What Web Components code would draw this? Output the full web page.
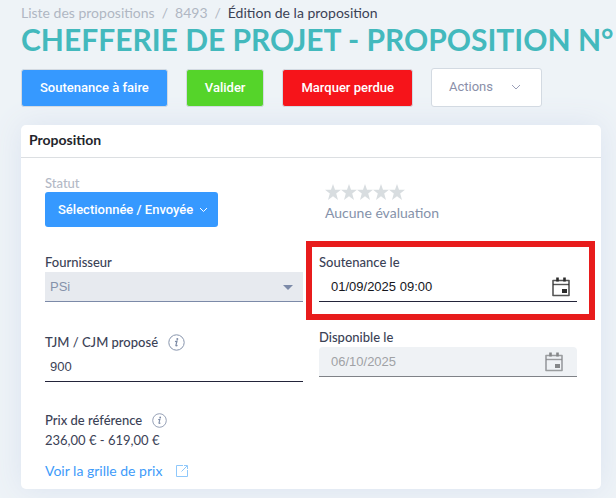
<!DOCTYPE html>
<html lang="fr">
<head>
<meta charset="utf-8">
<meta name="viewport" content="width=device-width, initial-scale=1">
<title>Édition de la proposition</title>
<style>
    body {
        margin: 0;
        background-color: #eef3f7;
        color: #3b4256;
        font-family: Lato, "Liberation Sans", sans-serif;
        font-size: 14px;
        line-height: 20px;
    }
</style>
</head>
<body>
<proposal-page>
    <bread-crumb slot="top">
        <a href="#liste">Liste des propositions</a>
        <a href="#8493">8493</a>
        <span>Édition de la proposition</span>
    </bread-crumb>
    <page-title slot="top">CHEFFERIE DE PROJET - PROPOSITION N°</page-title>
    <action-bar slot="top">
        <app-button variant="primary">Soutenance à faire</app-button>
        <app-button variant="success">Valider</app-button>
        <app-button variant="danger">Marquer perdue</app-button>
        <app-button variant="plain" caret>Actions</app-button>
    </action-bar>
    <info-card>
        <span slot="heading">Proposition</span>
        <status-menu slot="left" label="Statut">Sélectionnée / Envoyée</status-menu>
        <select-field slot="left" label="Fournisseur" value="PSi"></select-field>
        <amount-field slot="left" label="TJM / CJM proposé" value="900"></amount-field>
        <price-reference slot="left" label="Prix de référence" value="236,00 € - 619,00 €"></price-reference>
        <star-rating slot="right">Aucune évaluation</star-rating>
        <date-field slot="right" label="Soutenance le" value="01/09/2025 09:00" highlighted></date-field>
        <date-field slot="right" label="Disponible le" value="06/10/2025" disabled></date-field>
    </info-card>
</proposal-page>

<script>
const infoIcon = `
    <svg class="info" width="17" height="17" viewBox="0 0 17 17" aria-hidden="true">
        <circle cx="8.5" cy="8.5" r="7.7" fill="none" stroke="#8794ac"/>
        <circle cx="9.3" cy="5" r="1" fill="#7c8aa5"/>
        <path d="M7 7.6L9 7.1L7.9 11.3Q7.7 12.3 9.5 11.4" fill="none" stroke="#7c8aa5" stroke-width="1.2"/>
    </svg>`;

const fieldStyle = `
    :host {
        display: block;
        position: relative;
    }
    label {
        display: block;
        font-size: 13px;
        font-weight: 500;
        line-height: 19px;
    }
    input, select {
        box-sizing: border-box;
        width: 100%;
        height: 30px;
        margin: 0;
        border: 0;
        border-bottom: 1px solid #23243a;
        border-radius: 0;
        background-color: transparent;
        color: inherit;
        font: 13px "Liberation Sans", sans-serif;
        outline: 0;
        appearance: none;
    }
`;

class ProposalPage extends HTMLElement {
    connectedCallback() {
        this.attachShadow({ mode: 'open' });
        this.shadowRoot.innerHTML = `
            <style>
                :host {
                    display: block;
                    padding: 3px 15px 9px 21px;
                }
                header {
                    margin-bottom: 18px;
                }
            </style>
            <header><slot name="top"></slot></header>
            <main><slot></slot></main>
        `;
    }
}
customElements.define('proposal-page', ProposalPage);

class BreadCrumb extends HTMLElement {
    connectedCallback() {
        this.attachShadow({ mode: 'open' });
        this.shadowRoot.innerHTML = `
            <style>
                :host {
                    display: block;
                }
                nav {
                    display: flex;
                    color: #b0b7c3;
                }
                ::slotted(a) {
                    color: inherit;
                    text-decoration: none;
                }
                ::slotted(span) {
                    color: #3b4256;
                }
                i {
                    font-style: normal;
                    padding: 0 7px;
                }
            </style>
            <nav aria-label="Fil d'Ariane"></nav>
        `;
        const nav = this.shadowRoot.querySelector('nav');
        [...this.children].forEach((item, index) => {
            item.slot = 'item' + index;
            if (index > 0) nav.insertAdjacentHTML('beforeend', '<i>/</i>');
            nav.insertAdjacentHTML('beforeend', `<slot name="item${index}"></slot>`);
        });
    }
}
customElements.define('bread-crumb', BreadCrumb);

class PageTitle extends HTMLElement {
    connectedCallback() {
        this.attachShadow({ mode: 'open' });
        this.shadowRoot.innerHTML = `
            <style>
                :host {
                    display: block;
                    margin-right: -15px;
                }
                h1 {
                    margin: 0;
                    color: #43b9bd;
                    font-size: 30px;
                    font-weight: 700;
                    line-height: 32px;
                    white-space: nowrap;
                }
            </style>
            <h1><slot></slot></h1>
        `;
    }
}
customElements.define('page-title', PageTitle);

class ActionBar extends HTMLElement {
    connectedCallback() {
        this.attachShadow({ mode: 'open' });
        this.shadowRoot.innerHTML = `
            <style>
                :host {
                    display: flex;
                    align-items: center;
                    gap: 18px;
                    margin-top: 13px;
                }
            </style>
            <slot></slot>
        `;
    }
}
customElements.define('action-bar', ActionBar);

class AppButton extends HTMLElement {
    connectedCallback() {
        this.attachShadow({ mode: 'open' });
        const caret = `
            <svg width="10" height="6" viewBox="0 0 10 6" aria-hidden="true">
                <path d="M1 1L5 5L9 1" fill="none" stroke="#9a9fb8"/>
            </svg>`;
        this.shadowRoot.innerHTML = `
            <style>
                :host {
                    display: block;
                }
                button {
                    display: flex;
                    align-items: center;
                    gap: 18px;
                    margin: 0;
                    padding: 8px 18px;
                    border: 1px solid #d3dae2;
                    border-radius: 3px;
                    color: white;
                    font: 500 13px/20px Roboto, "Liberation Sans", sans-serif;
                    white-space: nowrap;
                }
                :host([variant="primary"]) button {
                    background-color: #3699ff;
                }
                :host([variant="success"]) button {
                    background-color: #55d42a;
                }
                :host([variant="danger"]) button {
                    background-color: #f6141a;
                }
                :host([variant="plain"]) button {
                    padding: 8px 20px 9px 17px;
                    background-color: white;
                    color: #8a8fa9;
                    font-weight: 400;
                }
            </style>
            <button type="button"><slot></slot>${this.hasAttribute('caret') ? caret : ''}</button>
        `;
    }
}
customElements.define('app-button', AppButton);

class InfoCard extends HTMLElement {
    connectedCallback() {
        this.attachShadow({ mode: 'open' });
        this.shadowRoot.innerHTML = `
            <style>
                :host {
                    display: block;
                    border-radius: 5px;
                    background-color: white;
                    box-shadow: 0 0 30px #dbe3f0;
                }
                h2 {
                    margin: 0;
                    padding: 5px 8px 7px;
                    border-bottom: 1px solid #dcdfe2;
                    color: #23252b;
                    font-size: 14px;
                    font-weight: 700;
                    line-height: 20px;
                }
                .columns {
                    display: grid;
                    grid-template-columns: 1fr 1fr;
                    gap: 16px;
                    padding: 16px 24px 8px;
                }
                .columns > div {
                    display: flex;
                    flex-direction: column;
                    gap: 26px;
                }
            </style>
            <h2><slot name="heading"></slot></h2>
            <div class="columns">
                <div><slot name="left"></slot></div>
                <div><slot name="right"></slot></div>
            </div>
        `;
    }
}
customElements.define('info-card', InfoCard);

class StatusMenu extends HTMLElement {
    connectedCallback() {
        this.attachShadow({ mode: 'open' });
        this.shadowRoot.innerHTML = `
            <style>
                :host {
                    display: block;
                }
                label {
                    display: block;
                    color: #b3b9c6;
                    font-weight: 500;
                    font-size: 13px;
                    line-height: 18px;
                }
                button {
                    display: flex;
                    align-items: center;
                    gap: 6px;
                    height: 35px;
                    margin: 0;
                    padding: 0 10px 0 13px;
                    border: 0;
                    border-radius: 3px;
                    background-color: #3699ff;
                    color: white;
                    font: 500 13px/20px Roboto, "Liberation Sans", sans-serif;
                    white-space: nowrap;
                }
            </style>
            <label for="status">${this.getAttribute('label')}</label>
            <button type="button" id="status" aria-haspopup="true">
                <slot></slot>
                <svg width="9" height="6" viewBox="0 0 9 6" aria-hidden="true">
                    <path d="M1 1L4.5 4.5L8 1" fill="none" stroke="white"/>
                </svg>
            </button>
        `;
    }
}
customElements.define('status-menu', StatusMenu);

class SelectField extends HTMLElement {
    connectedCallback() {
        this.attachShadow({ mode: 'open' });
        this.shadowRoot.innerHTML = `
            <style>
                ${fieldStyle}
                .box {
                    display: grid;
                    align-items: center;
                }
                .box > * {
                    grid-area: 1 / 1;
                }
                select {
                    padding: 0 5px;
                    border-color: #7c8aa8;
                    background-color: #e7eaef;
                    color: #8592aa;
                    opacity: 1;
                }
                svg {
                    justify-self: end;
                    margin-right: 10px;
                }
            </style>
            <label for="field">${this.getAttribute('label')}</label>
            <div class="box">
                <select id="field" disabled><option>${this.getAttribute('value')}</option></select>
                <svg width="10" height="5" viewBox="0 0 10 5" aria-hidden="true">
                    <path d="M0 0H10L5 5Z" fill="#7c8aa8"/>
                </svg>
            </div>
        `;
    }
}
customElements.define('select-field', SelectField);

class AmountField extends HTMLElement {
    connectedCallback() {
        this.attachShadow({ mode: 'open' });
        this.shadowRoot.innerHTML = `
            <style>
                ${fieldStyle}
                :host {
                    margin-top: 4px;
                }
                .caption {
                    display: flex;
                    align-items: center;
                    gap: 10px;
                    height: 20px;
                }
                input {
                    padding: 0 5px;
                }
            </style>
            <div class="caption"><label for="field">${this.getAttribute('label')}</label>${infoIcon}</div>
            <input id="field" type="text" value="${this.getAttribute('value')}">
        `;
    }
}
customElements.define('amount-field', AmountField);

class DateField extends HTMLElement {
    connectedCallback() {
        this.attachShadow({ mode: 'open' });
        this.shadowRoot.innerHTML = `
            <style>
                ${fieldStyle}
                .box {
                    display: grid;
                    align-items: center;
                }
                .box > * {
                    grid-area: 1 / 1;
                }
                input {
                    padding: 0 40px 0 12px;
                    color: #15161c;
                }
                button {
                    display: flex;
                    justify-self: end;
                    margin-right: 7px;
                    padding: 0;
                    border: 0;
                    background: none;
                    color: #2b2b2b;
                }
                :host([disabled]) input {
                    border-color: #7f8287;
                    border-radius: 4px 4px 0 0;
                    background-color: #eff2f5;
                    color: #a0a2a5;
                }
                :host([disabled]) button {
                    margin-right: 14px;
                    color: #858789;
                }
                /* frame drawn over the neighbouring space */
                :host([highlighted])::after {
                    content: "";
                    position: absolute;
                    inset: -12px -18px -18px -13px;
                    border: 6px solid #e81c1c;
                    pointer-events: none;
                }
            </style>
            <label for="field">${this.getAttribute('label')}</label>
            <div class="box">
                <input id="field" type="text" value="${this.getAttribute('value')}">
                <button type="button" aria-label="Calendrier">
                    <svg width="18" height="20" viewBox="0 0 18 20" aria-hidden="true">
                        <path d="M1 3.5H17V18.5H1Z" fill="none" stroke="currentColor" stroke-width="1.6" stroke-linejoin="round" opacity="0.8"/>
                        <path d="M1 7.5H17" stroke="currentColor" stroke-width="1.4" opacity="0.8"/>
                        <path d="M5.5 0.5V4.5M12.5 0.5V4.5" stroke="currentColor" stroke-width="2.6"/>
                        <rect x="10" y="12" width="5" height="4" fill="currentColor"/>
                    </svg>
                </button>
            </div>
        `;
        if (this.hasAttribute('disabled')) {
            this.shadowRoot.querySelector('input').disabled = true;
            this.shadowRoot.querySelector('button').disabled = true;
        }
    }
}
customElements.define('date-field', DateField);

class PriceReference extends HTMLElement {
    connectedCallback() {
        this.attachShadow({ mode: 'open' });
        this.shadowRoot.innerHTML = `
            <style>
                :host {
                    display: block;
                    margin-top: 2px;
                    font-size: 13px;
                }
                .caption {
                    display: flex;
                    align-items: center;
                    gap: 10px;
                    font-weight: 500;
                }
                .info {
                    width: 15px;
                    height: 15px;
                }
                a {
                    display: flex;
                    align-items: center;
                    gap: 14px;
                    margin-top: 11px;
                    color: #3e9bfa;
                    font-size: 14px;
                    text-decoration: none;
                }
            </style>
            <div class="caption"><span>${this.getAttribute('label')}</span>${infoIcon}</div>
            <div>${this.getAttribute('value')}</div>
            <a href="#grille">Voir la grille de prix
                <svg width="12" height="12" viewBox="0 0 12 12" fill="none" stroke="#8fc8fb" aria-hidden="true">
                    <path d="M7 0.5H0.5V11.5H11.5V5"/>
                    <path d="M5.5 6.5L11 1M8 0.5H11.5V4"/>
                </svg>
            </a>
        `;
    }
}
customElements.define('price-reference', PriceReference);

class StarRating extends HTMLElement {
    connectedCallback() {
        this.attachShadow({ mode: 'open' });
        const star = '<svg width="16" height="16" viewBox="0 0 16 16" aria-hidden="true"><path d="M8 0L10 5.8H16L11.2 9.6L13 16L8 12.2L3 16L4.8 9.6L0 5.8H6Z" fill="#d8dde0"/></svg>';
        this.shadowRoot.innerHTML = `
            <style>
                :host {
                    display: block;
                    padding: 10px 6px 4px;
                    color: #8592aa;
                }
                .stars {
                    display: flex;
                    margin-bottom: 3px;
                }
            </style>
            <div class="stars">${star.repeat(5)}</div>
            <slot></slot>
        `;
    }
}
customElements.define('star-rating', StarRating);
</script>
</body>
</html>
